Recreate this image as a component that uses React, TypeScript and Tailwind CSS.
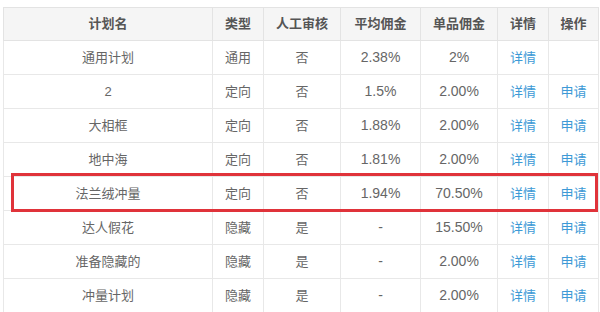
import React from "react";

interface Plan {
  name: string;
  type: string;
  review: string;
  avg: string;
  single: string;
  apply: boolean;
}

const plans: Plan[] = [
  { name: "通用计划", type: "通用", review: "否", avg: "2.38%", single: "2%", apply: false },
  { name: "2", type: "定向", review: "否", avg: "1.5%", single: "2.00%", apply: true },
  { name: "大相框", type: "定向", review: "否", avg: "1.88%", single: "2.00%", apply: true },
  { name: "地中海", type: "定向", review: "否", avg: "1.81%", single: "2.00%", apply: true },
  { name: "法兰绒冲量", type: "定向", review: "否", avg: "1.94%", single: "70.50%", apply: true },
  { name: "达人假花", type: "隐藏", review: "是", avg: "-", single: "15.50%", apply: true },
  { name: "准备隐藏的", type: "隐藏", review: "是", avg: "-", single: "2.00%", apply: true },
  { name: "冲量计划", type: "隐藏", review: "是", avg: "-", single: "2.00%", apply: true },
];

const headers = ["计划名", "类型", "人工审核", "平均佣金", "单品佣金", "详情", "操作"];
const widths = ["w-[209px]", "w-[51px]", "w-[77px]", "w-[80px]", "w-[77px]", "w-[51px]", "w-[50px]"];

export default function App() {
  return (
    <div
      className="relative w-[600px] h-[312px] overflow-hidden bg-white pl-[3px] pt-[7px]"
      style={{ fontFamily: '"Liberation Sans", "Noto Sans CJK SC", sans-serif' }}
    >
      <table className="w-[595px] table-fixed border-collapse text-[13px] text-[#666]">
        <colgroup>
          {widths.map((w, i) => (
            <col key={i} className={w} />
          ))}
        </colgroup>
        <thead>
          <tr className="h-[33px] bg-[#f5f5f5]">
            {headers.map((h, i) => (
              <th key={i} className="border border-[#e3e3e3] text-center font-bold text-[#555]">
                {h}
              </th>
            ))}
          </tr>
        </thead>
        <tbody>
          {plans.map((p, i) => (
            <tr key={i} className="h-[34px]">
              <td className="border border-[#e8e8e8] text-center">{p.name}</td>
              <td className="border border-[#e8e8e8] text-center">{p.type}</td>
              <td className="border border-[#e8e8e8] text-center">{p.review}</td>
              <td className="border border-[#e8e8e8] text-center text-[14px]">{p.avg}</td>
              <td className="border border-[#e8e8e8] text-center text-[14px]">{p.single}</td>
              <td className="border border-[#e8e8e8] text-center text-[#3d9ad6]">详情</td>
              <td className="border border-[#e8e8e8] text-center text-[#3d9ad6]">
                {p.apply ? "申请" : ""}
              </td>
            </tr>
          ))}
        </tbody>
      </table>
      {/* highlight box drawn over the 法兰绒冲量 row */}
      <div className="absolute left-[11px] top-[173px] w-[587px] h-[39px] border-[3px] border-[#e0333a]" />
    </div>
  );
}
